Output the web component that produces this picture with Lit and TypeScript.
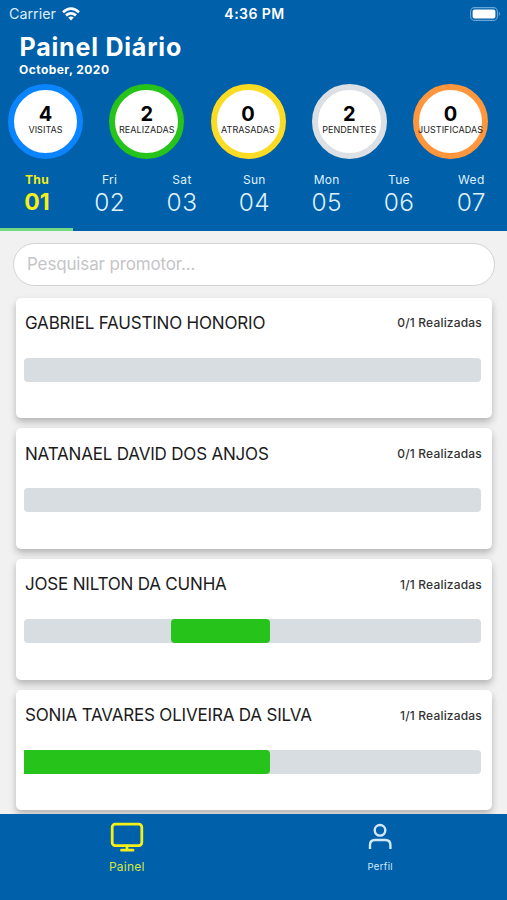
import { LitElement, html, css, svg } from "lit";
import { customElement, property } from "lit/decorators.js";
import { classMap } from "lit/directives/class-map.js";
import { styleMap } from "lit/directives/style-map.js";

interface Metric { value: number; label: string; tone: string; }
interface Day { name: string; date: string; }
interface Promoter { name: string; done: string; start: number; end: number; }

const metrics: Metric[] = [
  { value: 4, label: "VISITAS", tone: "blue" },
  { value: 2, label: "REALIZADAS", tone: "green" },
  { value: 0, label: "ATRASADAS", tone: "yellow" },
  { value: 2, label: "PENDENTES", tone: "gray" },
  { value: 0, label: "JUSTIFICADAS", tone: "orange" },
];

const days: Day[] = [
  { name: "Thu", date: "01" },
  { name: "Fri", date: "02" },
  { name: "Sat", date: "03" },
  { name: "Sun", date: "04" },
  { name: "Mon", date: "05" },
  { name: "Tue", date: "06" },
  { name: "Wed", date: "07" },
];

const promoters: Promoter[] = [
  { name: "GABRIEL FAUSTINO HONORIO", done: "0/1", start: 0, end: 0 },
  { name: "NATANAEL DAVID DOS ANJOS", done: "0/1", start: 0, end: 0 },
  { name: "JOSE NILTON DA CUNHA", done: "1/1", start: 32.2, end: 53.8 },
  { name: "SONIA TAVARES OLIVEIRA DA SILVA", done: "1/1", start: 0, end: 53.8 },
];

@customElement("promoter-card")
export class PromoterCard extends LitElement {
  @property({ attribute: false }) promoter!: Promoter;

  static styles = css`
    :host {
      display: block;
      box-sizing: border-box;
      flex: none;
      height: 120.7px;
      padding: 14.4px 11.5px 0 8.5px;
      background: #fff;
      border-radius: 5px;
      box-shadow: 0 4px 7px rgba(0, 0, 0, 0.25);
    }
    .top {
      display: flex;
      align-items: center;
      justify-content: space-between;
      height: 22px;
      margin: 0 -1.5px 0 1px;
      white-space: nowrap;
      color: #1c1c1c;
    }
    .name { font-size: 17px; letter-spacing: -0.19px; }
    .done { font-size: 12px; font-weight: 500; letter-spacing: 0.18px; color: #333; }
    .track {
      display: flex;
      height: 24px;
      margin-top: 23.8px;
      overflow: hidden;
      background: #d7dde0;
      border-radius: 4px;
    }
    .track.from-start { border-radius: 0 4px 4px 0; }
    .fill { background: #26c31a; border-radius: 4px; }
    .from-start .fill { border-radius: 0 4px 4px 0; }
  `;

  render() {
    const p = this.promoter;
    const filled = p.end > p.start;
    return html`
      <div class="top">
        <span class="name">${p.name}</span>
        <span class="done">${p.done} Realizadas</span>
      </div>
      <div class=${classMap({ track: true, "from-start": filled && p.start === 0 })}>
        ${filled
          ? html`<div class="fill" style=${styleMap({ marginLeft: `${p.start}%`, width: `${p.end - p.start}%` })}></div>`
          : null}
      </div>
    `;
  }
}

const wifiIcon = svg`
  <g fill="none" stroke="#fff" stroke-width="2.7">
    <path d="M1 5.2Q9 -1.9 17 5.2"/>
    <path d="M4 8.4Q9 4.2 14 8.4"/>
  </g>
  <path fill="#fff" d="M6.2 10.6Q9 8.4 11.8 10.6L9 13.4Z"/>`;

@customElement("app-root")
export class AppRoot extends LitElement {
  static styles = css`
    :host {
      display: flex;
      flex-direction: column;
      width: 507px;
      height: 900px;
      overflow: hidden;
      background: #f1f1f1;
      font-family: Inter, "Liberation Sans", sans-serif;
    }
    svg { display: block; }
    .header {
      display: flex;
      flex-direction: column;
      flex: none;
      box-sizing: border-box;
      height: 230.5px;
      background: #0060a9;
      color: #fff;
    }
    .status {
      display: grid;
      grid-template-columns: 1fr auto 1fr;
      align-items: center;
      height: 28px;
      padding: 0 6px 0 8px;
      line-height: 28px;
    }
    .carrier { display: flex; align-items: center; gap: 6px; padding-left: 1px; font-size: 14.3px; color: #d9edfb; }
    .clock { font-size: 14px; font-weight: 600; letter-spacing: 0.45px; }
    .battery { justify-self: end; }
    .title {
      margin: 5px 0 0 19.5px;
      font-size: 25px;
      line-height: 28px;
      font-weight: 700;
      letter-spacing: 0.8px;
    }
    .month {
      margin: 1px 0 0 19px;
      font-size: 12px;
      line-height: 15px;
      font-weight: 700;
      letter-spacing: 0.45px;
    }
    .metrics {
      display: flex;
      justify-content: space-between;
      margin-top: 6.5px;
      padding: 0 19px 0 8px;
    }
    .metric {
      display: flex;
      flex-direction: column;
      align-items: center;
      box-sizing: border-box;
      width: 75px;
      height: 75px;
      padding-top: 13px;
      border: 6.5px solid;
      border-radius: 50%;
      background: #fff;
      color: #000;
      white-space: nowrap;
    }
    .blue { border-color: #0a85ff; }
    .green { border-color: #26c31a; }
    .yellow { border-color: #fcdc22; }
    .gray { border-color: #dce0e5; }
    .orange { border-color: #ff963c; }
    .value { font-size: 20px; line-height: 22px; font-weight: 700; }
    .label { margin-top: -1px; font-size: 9px; line-height: 11px; letter-spacing: 0.05px; color: #222; }
    .days { display: grid; grid-template-columns: 73px repeat(6, 1fr); flex: 1; margin-top: 11px; }
    .day {
      display: flex;
      flex-direction: column;
      align-items: center;
      padding-left: 1px;
      border-bottom: 3px solid transparent;
      color: #dff1ff;
    }
    .day-name { margin-top: 2px; font-size: 12px; line-height: 16px; letter-spacing: 0.3px; }
    .date { margin-top: 0.5px; font-size: 24.5px; line-height: 28px; font-weight: 300; letter-spacing: 0.4px; }
    .selected { color: #f4ee19; border-bottom-color: #73d982; }
    .selected .day-name { font-weight: 700; }
    .selected .date { font-weight: 700; font-size: 23px; letter-spacing: 0; }
    .search {
      box-sizing: border-box;
      flex: none;
      height: 43px;
      margin: 12.5px 12px 0 13px;
      padding-left: 13px;
      border: 1.5px solid #d2d2d2;
      border-radius: 22px;
      background: #fff;
      font-size: 17px;
      line-height: 41px;
      letter-spacing: -0.15px;
      color: #c5c5c8;
    }
    .list {
      display: flex;
      flex-direction: column;
      gap: 10px;
      flex: 1;
      min-height: 0;
      overflow: hidden;
      padding: 11.6px 15px 0 15.5px;
    }
    .tabs {
      display: grid;
      grid-template-columns: 1fr 1fr;
      flex: none;
      height: 86px;
      background: #0060a9;
    }
    .tab { display: flex; flex-direction: column; align-items: center; color: #d3e9fa; }
    .tab.active { color: #f4ee19; }
    .icon { height: 36px; margin-top: 6px; }
    .tab-label { margin-top: 4px; font-size: 9.5px; line-height: 14px; letter-spacing: 0.35px; }
    .active .tab-label { font-size: 12px; letter-spacing: 0.2px; color: #d3e545; }
  `;

  render() {
    return html`
      <header class="header">
        <div class="status">
          <span class="carrier">Carrier
            <svg width="18" height="14" viewBox="0 0 18 14">${wifiIcon}</svg>
          </span>
          <span class="clock">4:36 PM</span>
          <svg class="battery" width="31" height="14" viewBox="0 0 31 14">
            <rect x=".6" y=".6" width="26.8" height="12.8" rx="4" fill="none" stroke="#69a7d8" stroke-width="1.1"/>
            <rect x="2.6" y="2.6" width="22.8" height="8.8" rx="2" fill="#fff"/>
            <path d="M28.8 4.8Q31.2 7 28.8 9.2Z" fill="#69a7d8"/>
          </svg>
        </div>
        <div class="title">Painel Diário</div>
        <div class="month">October, 2020</div>
        <div class="metrics">
          ${metrics.map((m) => html`
            <div class="metric ${m.tone}">
              <span class="value">${m.value}</span>
              <span class="label">${m.label}</span>
            </div>`)}
        </div>
        <div class="days">
          ${days.map((d, i) => html`
            <div class=${classMap({ day: true, selected: i === 0 })}>
              <span class="day-name">${d.name}</span>
              <span class="date">${d.date}</span>
            </div>`)}
        </div>
      </header>
      <div class="search">Pesquisar promotor...</div>
      <main class="list">
        ${promoters.map((p) => html`<promoter-card .promoter=${p}></promoter-card>`)}
      </main>
      <nav class="tabs">
        <div class="tab active">
          <svg class="icon" width="36" height="36" viewBox="0 0 36 36" fill="none" stroke="currentColor" stroke-width="2.8" stroke-linecap="round">
            <rect x="3.2" y="4.2" width="29.6" height="21.4" rx="3"/>
            <path d="M18 26V30M12.5 30.2H24"/>
          </svg>
          <span class="tab-label">Painel</span>
        </div>
        <div class="tab">
          <svg class="icon" width="36" height="36" viewBox="0 0 36 36" fill="none" stroke="currentColor" stroke-width="2.4">
            <circle cx="18" cy="10.3" r="5.3"/>
            <path d="M8 29V25Q8 20 13 20H23.4Q28.4 20 28.4 25V29"/>
          </svg>
          <span class="tab-label">Perfil</span>
        </div>
      </nav>
    `;
  }
}
